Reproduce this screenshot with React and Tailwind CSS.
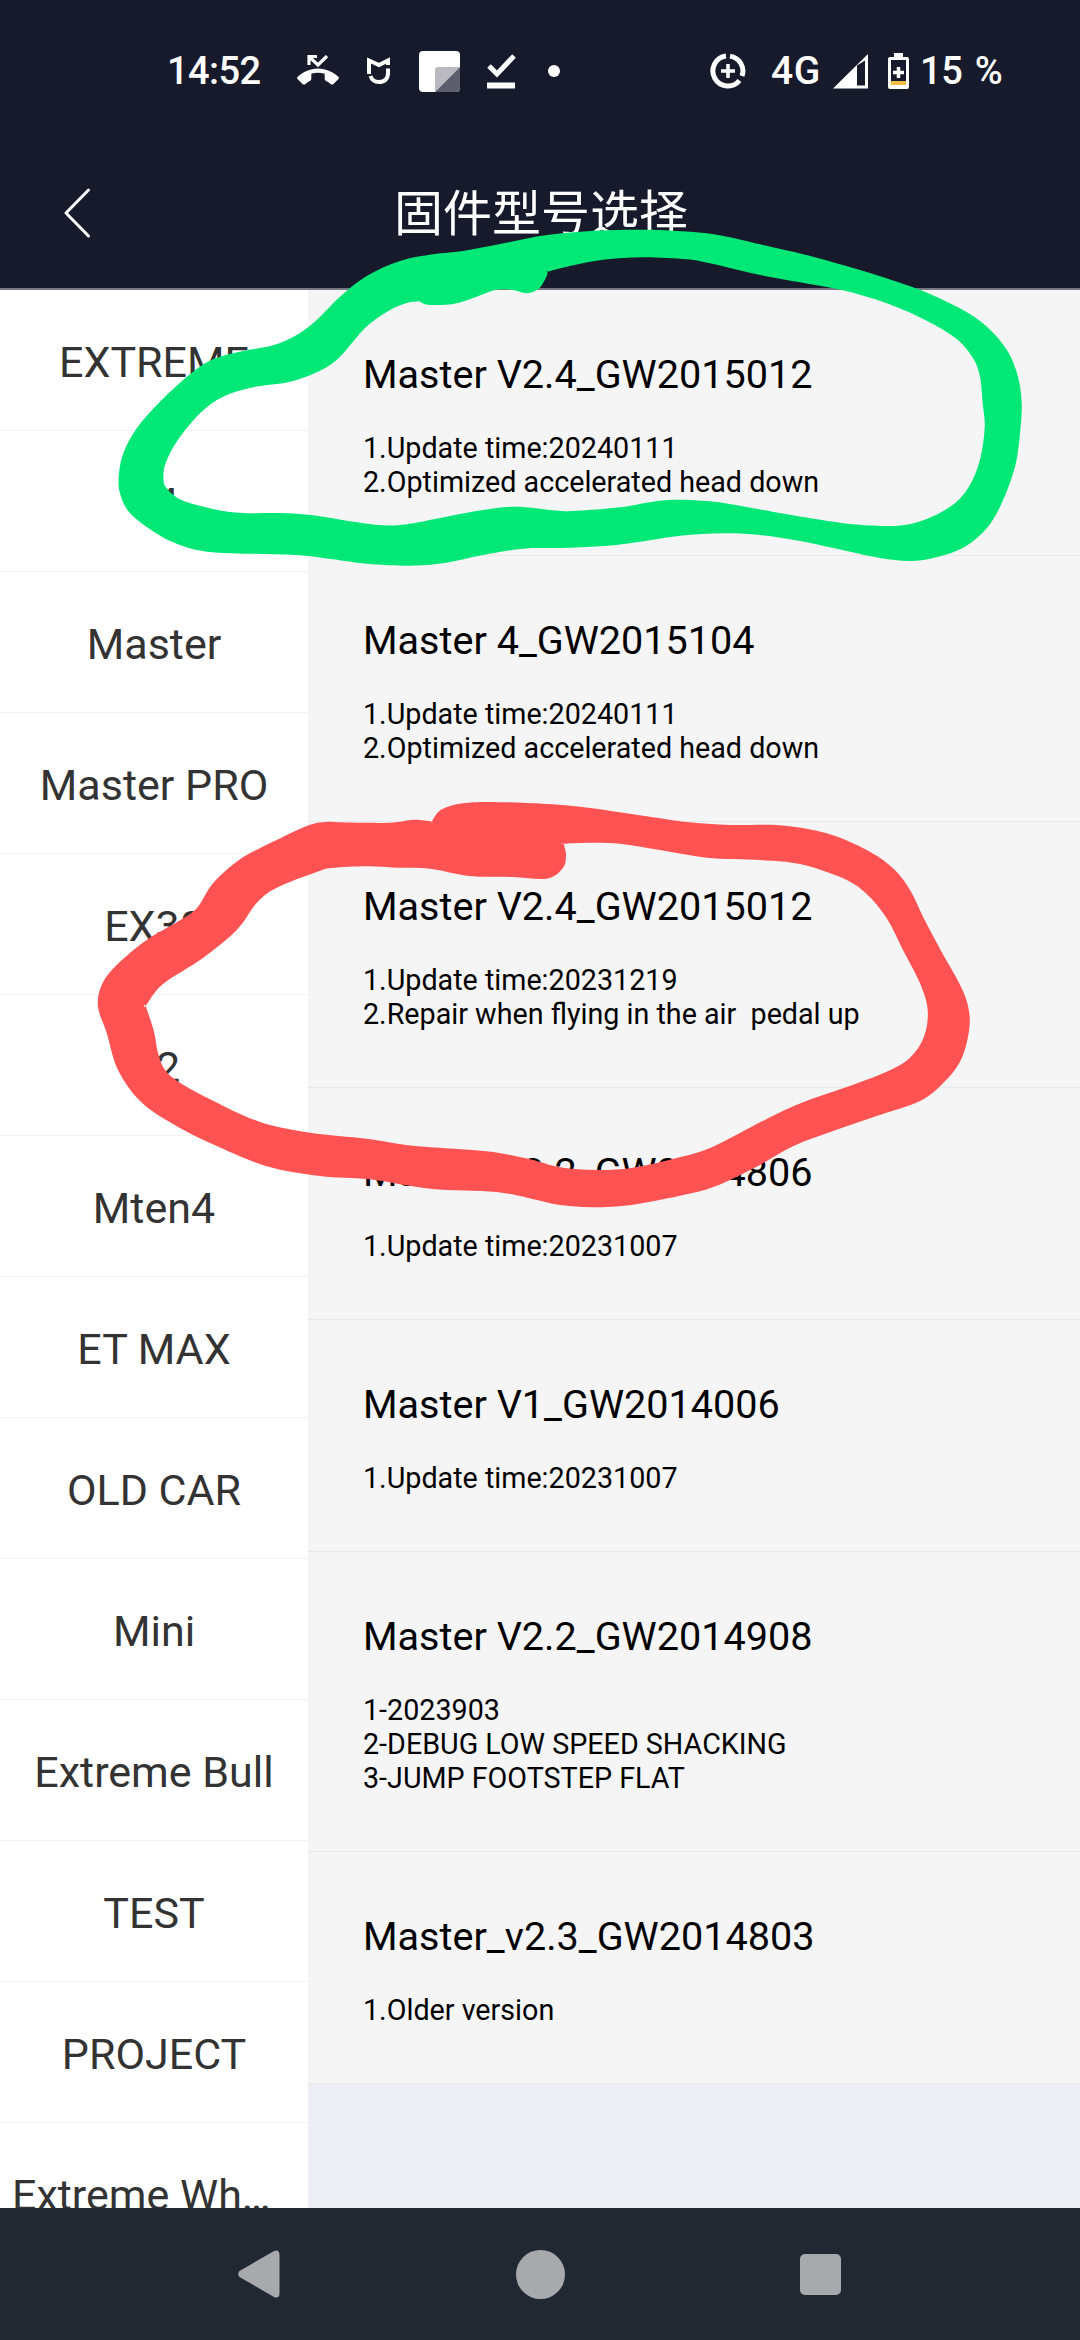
import { useState } from "react";

const models = ['EXTREME', 'T4', 'Master', 'Master PRO', 'EX30', 'A2', 'Mten4', 'ET MAX', 'OLD CAR', 'Mini', 'Extreme Bull', 'TEST', 'PROJECT', 'Extreme Wh…'];

const firmwares = [
    { name: 'Master V2.4_GW2015012', notes: ['1.Update time:20240111', '2.Optimized accelerated head down'] },
    { name: 'Master 4_GW2015104', notes: ['1.Update time:20240111', '2.Optimized accelerated head down'] },
    { name: 'Master V2.4_GW2015012', notes: ['1.Update time:20231219', '2.Repair when flying in the air  pedal up'] },
    { name: 'Master V2.2_GW2014806', notes: ['1.Update time:20231007'] },
    { name: 'Master V1_GW2014006', notes: ['1.Update time:20231007'] },
    { name: 'Master V2.2_GW2014908', notes: ['1-2023903', '2-DEBUG LOW SPEED SHACKING', '3-JUMP FOOTSTEP FLAT'] },
    { name: 'Master_v2.3_GW2014803', notes: ['1.Older version'] },
];

// marker strokes, a repeated point makes a sharp corner
const greenOuter = [[463, 251], [500, 244], [547, 235], [600, 230.5], [643, 229.7], [677, 231], [717, 234.7], [760, 244.3], [813, 256.7], [860, 270], [900, 282.7], [930, 294], [967, 312.3], [990, 329.7], [1008, 351.7], [1018, 376.7], [1021.7, 403.3], [1020, 433.3], [1015, 466.7], [1001.7, 503.3], [986.7, 528.3], [965, 546.7], [936.7, 557.3], [910, 561], [880, 558], [846.7, 551], [800, 541], [760, 535], [723, 533.3], [680, 535.7], [633, 542.7], [600, 546.3], [560, 548], [523, 548.7], [483, 555], [443, 563.3], [410, 565.7], [366.7, 563.7], [333, 559.3], [300, 555.3], [260, 554], [206.7, 551.7], [173, 542.3], [146.7, 527], [128, 510.7], [120, 493.3], [118.7, 476.7], [123.3, 453.3], [136.7, 428.3], [160, 401.7], [190, 374.3], [213, 359.3], [243, 351], [273, 345.3], [296.7, 335], [316.7, 320], [340, 296.7], [366.7, 276], [400, 261], [433, 254.3]];
const greenInner = [[547.3, 271.7], [547.3, 271.7], [567, 266.7], [603, 259.8], [643, 257.3], [686.7, 259.3], [710, 263.3], [756.7, 274.3], [800, 282.3], [843, 290.3], [886.7, 303.3], [926.7, 320.7], [956.7, 339], [973, 358.3], [980, 376.7], [982.7, 403.3], [984.7, 426.7], [980.7, 456.7], [971.7, 481.7], [956.7, 501.7], [933, 516.3], [906.7, 524.7], [876.7, 525.7], [840, 522.7], [786.7, 514.3], [746.7, 507], [710, 501.3], [673, 499.7], [646.7, 502.7], [620, 507.3], [573, 511], [553, 510.3], [516.7, 506.7], [483, 510], [450, 516], [410, 523.7], [383, 525.3], [346.7, 520.7], [313, 515.3], [280, 513], [243, 513], [216.7, 509.7], [186.7, 502], [174, 495.500], [167, 488.500], [163.7, 481.7], [165, 465], [176.7, 441.7], [200, 413.3], [223, 396.7], [253, 387.3], [290, 381.7], [320, 370.7], [338, 358.7], [353, 341.7], [368, 325.3], [390, 310], [406.7, 303], [419.3, 301.3], [419.3, 301.3], [428, 304.7], [453, 304], [476.7, 296.7], [495, 290], [513, 290], [526.7, 293.3], [539.3, 288.3], [546.7, 276]];
const redOuter = [[431.7, 821.3], [431.7, 821.3], [443, 808.7], [473, 802.3], [526.7, 803], [580, 806.7], [646.7, 816.3], [686.7, 822], [730, 825], [780, 825.3], [826.7, 833.3], [866.7, 850], [893, 868.3], [910, 890], [923, 916.7], [940, 949], [961.7, 988.3], [969.3, 1013.3], [968, 1036.7], [960, 1061.7], [943, 1083.3], [920, 1101], [876.7, 1116], [833, 1131], [793, 1146.3], [756.7, 1166.7], [716.7, 1185.7], [686.7, 1194.3], [633, 1204.7], [593, 1207.3], [560, 1205], [536.7, 1200], [496.7, 1192], [430, 1188.7], [370, 1179.3], [320, 1176], [266.7, 1166.3], [213, 1144.3], [173, 1124], [140, 1101], [118, 1070], [106.7, 1033], [98, 1006.7], [101.7, 985], [116.7, 965], [146.7, 940], [176.7, 922.3], [196.7, 908.3], [213, 883.3], [240, 859.3], [276.7, 840], [308, 825.5], [326, 822], [345, 822.5], [390, 822.7], [413, 819.7]];
const redInner = [[563.7, 843.7], [563.7, 843.7], [590, 842.7], [620, 843.7], [660, 850], [706.7, 857.7], [760, 860], [800, 864], [843, 878.3], [866.7, 894], [886.7, 918.3], [903, 950], [920, 983.3], [927.7, 1010], [924, 1036.7], [910, 1057.7], [886.7, 1071.7], [846.7, 1087], [803, 1102.3], [766.7, 1119], [713, 1146.7], [676.7, 1158], [633, 1167.7], [596.7, 1170], [560, 1167.3], [530, 1159.3], [486.7, 1151.3], [413, 1145.7], [366.7, 1138.7], [310, 1132.7], [260, 1122], [213, 1100.7], [180, 1082.7], [165, 1070], [158, 1053], [154, 1031.7], [145.7, 1006], [145.7, 1006], [163, 984], [203, 958], [236.7, 930], [256.7, 903], [276.7, 887.7], [318, 871.5], [332, 868], [366.7, 866.3], [396.7, 867.7], [430, 868.7], [470, 876], [513, 877], [546.7, 878.7], [562.7, 868.3], [566, 855]];

function smooth(pts) {
    const n = pts.length;
    const at = (i) => pts[(i + n) % n];
    let d = `M${pts[0][0]} ${pts[0][1]}`;
    for (let i = 0; i < n; i++) {
        const [a, b, c, e] = [at(i - 1), at(i), at(i + 1), at(i + 2)];
        d += `C${b[0] + (c[0] - a[0]) / 6} ${b[1] + (c[1] - a[1]) / 6} ${c[0] - (e[0] - b[0]) / 6} ${c[1] - (e[1] - b[1]) / 6} ${c[0]} ${c[1]}`;
    }
    return d + 'Z';
}

function StatusBar() {
    return (
        <div className="h-[142px] flex items-center text-white text-[38px] font-medium">
            <span className="ml-[167px] w-[130px] tracking-[-0.6px]">14:52</span>
            <svg width="42" height="32" viewBox="0 0 42 32" fill="currentColor">
                <path d="M0 22.500C5.500 17 13 13.500 21 13.500S36.500 17 42 22.500Q42 23.500 41.300 24.200L36.200 29.200Q35 30 33.800 29.200Q31.500 27 28.800 25.700Q27.700 25.200 27.700 24V18.700Q21 16.800 14.300 18.700V24Q14.300 25.200 13.200 25.700Q10.500 27 8.200 29.200Q7 30 5.800 29.200L.7 24.200Q0 23.500 0 22.500Z" />
                <path d="M12 10V1.500H20M12.500 2L21 10L30 1" fill="none" stroke="currentColor" strokeWidth="3.200" />
            </svg>
            <svg className="ml-[28px]" width="24" height="28" viewBox="0 0 24 28" fill="none" stroke="currentColor" strokeWidth="4">
                <path d="M2 17V3.500L12 8L21 3.500V8M21 11.500V16C21 22 17.500 25 12 25C8 25 4.800 23 3.500 19" />
            </svg>
            <svg className="ml-[28px]" width="41" height="41" viewBox="0 0 41 41">
                <rect width="41" height="41" rx="4" fill="#fff" />
                <path d="M16 41V19Q16 16 19 16H41Z" fill="#b9b9bf" />
                <path d="M41 16V37Q41 41 37 41H16Z" fill="#5d5e6b" />
            </svg>
            <svg className="ml-[27px]" width="29" height="36" viewBox="0 0 29 36" fill="none" stroke="currentColor">
                <path d="M2 13L10 21L27 3" strokeWidth="5" />
                <path d="M0 32.500H28" strokeWidth="6" />
            </svg>
            <div className="ml-[32px] size-[12px] rounded-full bg-white" />
            <svg className="ml-[150px]" width="36" height="36" viewBox="0 0 36 36" fill="none" stroke="currentColor">
                <path d="M16 3.100A15 15 0 1 0 29.500 27.500M20 3.100A15 15 0 0 1 32 23" strokeWidth="5" />
                <path d="M18 11V25M11 18H25" strokeWidth="3.500" />
            </svg>
            <span className="ml-[25px] w-[62px] text-[39px] tracking-[0.5px]">4G</span>
            <svg width="35" height="35" viewBox="0 0 35 35">
                <path d="M0 34.500L35 0V34.500ZM24 11.500V31.500H32V6.500Z" fill="currentColor" fillRule="evenodd" />
            </svg>
            <svg className="ml-[20px]" width="21" height="36" viewBox="0 0 21 36">
                <path d="M6 0H15V4H19Q21 4 21 6V34Q21 36 19 36H2Q0 36 0 34V6Q0 4 2 4H6Z" fill="#fff" />
                <path d="M3 7H18V28H3Z" fill="#171a2b" />
                <path d="M3 28H18V32H3Z" fill="#f2bd42" />
                <path d="M10.500 14V25M5 19.500H16" stroke="#fff" strokeWidth="3.500" />
            </svg>
            <span className="ml-[11px] tracking-[-0.3px] [word-spacing:3px]">15 %</span>
        </div>
    )
}

export default function App() {
    const [selected, setSelected] = useState('Master');

    return (
        <div className="relative w-[1080px] h-[2340px] flex flex-col overflow-hidden font-[Roboto,'Noto_Sans_CJK_SC',sans-serif]">
            <header className="h-[290px] shrink-0 bg-[#171a2b] border-b-2 border-[#767882]">
                <StatusBar />
                <div className="h-[142px] flex items-center">
                    <button className="w-[154px] pl-[63px]" aria-label="Back">
                        <svg width="28" height="50" viewBox="0 0 28 50" fill="none" stroke="#fff" strokeWidth="3" strokeLinecap="round" strokeLinejoin="round">
                            <path d="M25.500 2L3 25L25.500 48" />
                        </svg>
                    </button>
                    <h1 className="w-[774px] pt-[4px] text-center text-white text-[49px] leading-[60px]">固件型号选择</h1>
                </div>
            </header>
            <main className="flex-1 min-h-0 flex bg-[#edeef4]">
                <nav className="w-[308px] shrink-0 overflow-hidden bg-white">
                    {models.map((model) => (
                        <button key={model} onClick={() => setSelected(model)} aria-pressed={selected === model}
                        className={`w-full h-[141px] pt-[5px] px-3 border-b border-[#f3f3f3] block text-[43px] text-[#333333] whitespace-nowrap ${model.endsWith('…') ? 'text-left' : 'text-center'}`}>
                            {model}
                        </button>
                    ))}
                </nav>
                <div className="flex-1">
                    {firmwares.map((fw, i) => (
                        <div key={i} className="pl-[55px] pt-[61px] pb-[56px] bg-[#f5f5f5] border-b border-[#e8e8e8] text-black">
                            <h2 className="text-[39.6px] leading-[47px] mb-[33px]">{fw.name}</h2>
                            {fw.notes.map((note) => (
                                <p key={note} className="text-[28.7px] leading-[34px] whitespace-pre">{note}</p>
                            ))}
                        </div>
                    ))}
                </div>
            </main>
            <footer className="h-[132px] shrink-0 bg-[#222831] flex items-center pl-[238px]">
                <svg width="42" height="48" viewBox="0 0 42 48" fill="#a8a9ad">
                    <path d="M1.500 21L36 1Q41.500 -1 41.500 5V43Q41.500 49 36 47L1.500 27Q-1 24 1.500 21Z" />
                </svg>
                <div className="ml-[236px] size-[49px] rounded-full bg-[#a8a9ad]" />
                <div className="ml-[235px] size-[41px] rounded-[5px] bg-[#a8a9ad]" />
            </footer>
            <svg className="absolute inset-0 pointer-events-none" width="1080" height="2340" viewBox="0 0 1080 2340" fillRule="evenodd">
                <path d={smooth(greenOuter) + smooth(greenInner)} fill="#02e877" />
                <path d={smooth(redOuter) + smooth(redInner)} fill="#ff5252" />
            </svg>
        </div>
    )
}
